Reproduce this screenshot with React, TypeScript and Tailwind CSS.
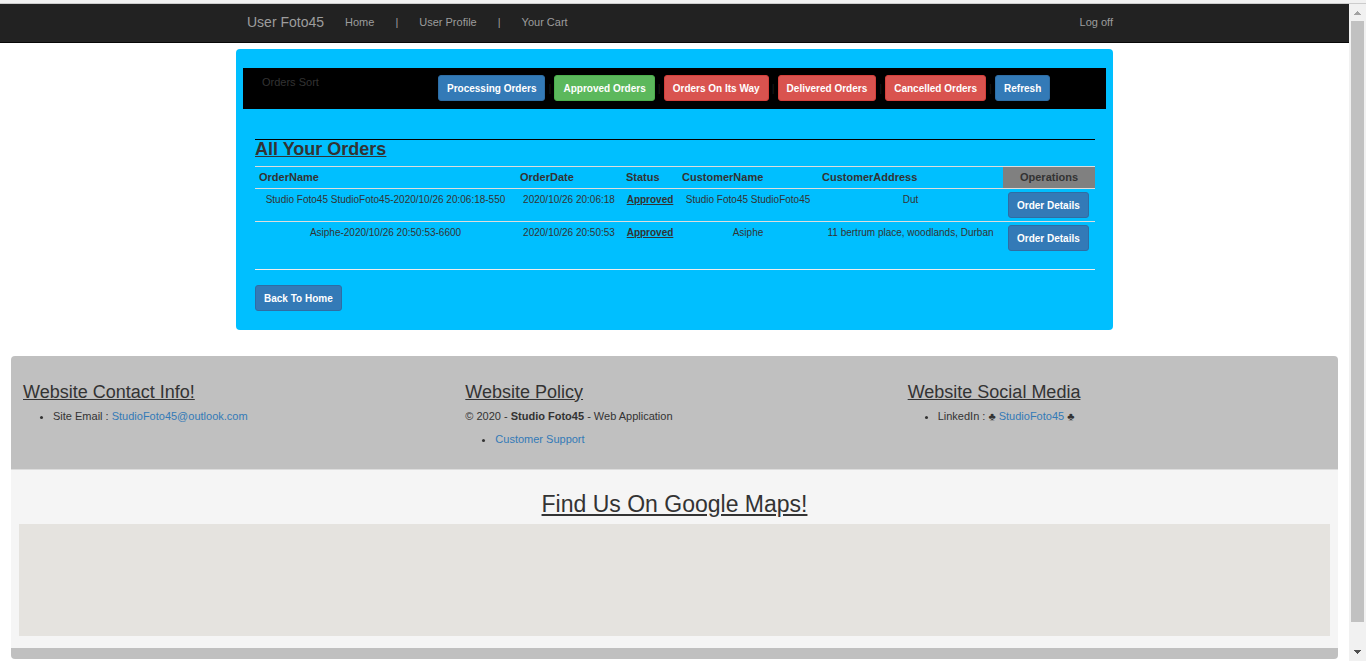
import React from "react";

type Tone = "primary" | "success" | "danger";

const tones: Record<Tone, string> = {
  primary: "bg-[#337ab7] border-[#2e6da4]",
  success: "bg-[#5cb85c] border-[#4cae4c]",
  danger: "bg-[#d9534f] border-[#d43f3a]",
};

function Button({ tone = "primary", children }: { tone?: Tone; children: React.ReactNode }) {
  return (
    <button
      type="button"
      className={`block h-[26px] shrink-0 whitespace-nowrap rounded-[3px] border px-2 pt-[2px] text-[10px] font-bold leading-4 text-white ${tones[tone]}`}
    >
      {children}
    </button>
  );
}

const filters: { label: string; tone: Tone }[] = [
  { label: "Processing Orders", tone: "primary" },
  { label: "Approved Orders", tone: "success" },
  { label: "Orders On Its Way", tone: "danger" },
  { label: "Delivered Orders", tone: "danger" },
  { label: "Cancelled Orders", tone: "danger" },
  { label: "Refresh", tone: "primary" },
];

const orders = [
  {
    name: "Studio Foto45 StudioFoto45-2020/10/26 20:06:18-550",
    date: "2020/10/26 20:06:18",
    customer: "Studio Foto45 StudioFoto45",
    address: "Dut",
  },
  {
    name: "Asiphe-2020/10/26 20:50:53-6600",
    date: "2020/10/26 20:50:53",
    customer: "Asiphe",
    address: "11 bertrum place, woodlands, Durban",
  },
];

function Navbar() {
  return (
    <nav className="border-b border-[#080808] bg-[#222222] text-[#9d9d9d]">
      <div className="mx-auto flex h-[38px] max-w-[877px] items-center gap-[21px] px-[11px] pb-[2px] text-[11px]">
        <a href="#" className="text-[14px]">User Foto45</a>
        <a href="#">Home</a>
        <span>|</span>
        <a href="#">User Profile</a>
        <span>|</span>
        <a href="#">Your Cart</a>
        <a href="#" className="-mr-[11px] ml-auto">Log off</a>
      </div>
    </nav>
  );
}

function Orders() {
  return (
    <main className="mx-auto mt-[6px] w-full max-w-[877px] rounded-[4px] bg-[#00bfff] px-[7px] pb-[19px] pt-[19px]">
      <div className="flex h-[41px] bg-black pl-[19px] pt-[7px] text-[#333333]">
        <span className="w-[176px] shrink-0 leading-[14px]">Orders Sort</span>
        <div className="flex">
          {filters.map((f, i) => (
            <React.Fragment key={f.label}>
              {i > 0 && <span className="w-[9px] text-center leading-[26px] text-[#1a1a1a]">|</span>}
              <Button tone={f.tone}>{f.label}</Button>
            </React.Fragment>
          ))}
        </div>
      </div>

      <div className="mt-[30px] pl-3 pr-[11px]">
        <section className="border-t border-black">
          <h1 className="h-[26px] text-[18px] font-bold leading-[18px] underline">All Your Orders</h1>
          <table className="w-full table-fixed border-collapse">
            <colgroup>
              <col />
              <col className="w-[106px]" />
              <col className="w-[56px]" />
              <col className="w-[140px]" />
              <col className="w-[185px]" />
              <col className="w-[92px]" />
            </colgroup>
            <thead>
              <tr className="h-[22px] border-y border-[#dddddd] text-left">
                <th className="px-1 pb-[2px]">OrderName</th>
                <th className="px-1 pb-[2px]">OrderDate</th>
                <th className="px-1 pb-[2px]">Status</th>
                <th className="px-1 pb-[2px]">CustomerName</th>
                <th className="px-1 pb-[2px]">CustomerAddress</th>
                <th className="bg-[#808080] px-1 pb-[2px] text-center">Operations</th>
              </tr>
            </thead>
            <tbody className="text-[10px]">
              {orders.map((o) => (
                <tr key={o.name} className="h-[33px] whitespace-nowrap border-t border-[#dddddd] text-center align-top">
                  <td className="pt-[3px]">{o.name}</td>
                  <td className="pt-[3px]">{o.date}</td>
                  <td className="pt-[3px] font-bold underline">Approved</td>
                  <td className="pt-[3px]">{o.customer}</td>
                  <td className="pt-[3px]">{o.address}</td>
                  <td className="pl-[5px] pt-[3px]">
                    <Button>Order Details</Button>
                  </td>
                </tr>
              ))}
            </tbody>
          </table>
        </section>
        <hr className="mb-[15px] mt-[14px] border-[#eeeeee]" />
        <Button>Back To Home</Button>
      </div>
    </main>
  );
}

function Footer() {
  const heading = "text-[18px] leading-5 underline";
  const list = "list-disc pl-[30px]";
  return (
    <footer className="mx-[11px] mt-[26px] overflow-hidden rounded-[4px] bg-[#c0c0c0]">
      <div className="grid h-[113px] grid-cols-3 pt-[26px]">
        <section className="px-3">
          <h2 className={heading}>Website Contact Info!</h2>
          <ul className={`${list} mt-[6px]`}>
            <li>
              Site Email : <a href="#" className="text-[#337ab7]">StudioFoto45@outlook.com</a>
            </li>
          </ul>
        </section>
        <section className="px-3">
          <h2 className={heading}>Website Policy</h2>
          <p className="mt-[6px]">
            © 2020 - <b>Studio Foto45</b> - Web Application
          </p>
          <ul className={`${list} mt-[7px]`}>
            <li>
              <a href="#" className="text-[#337ab7]">Customer Support</a>
            </li>
          </ul>
        </section>
        <section className="px-3">
          <h2 className={heading}>Website Social Media</h2>
          <ul className={`${list} mt-[6px]`}>
            <li>
              LinkedIn : ♣ <a href="#" className="text-[#337ab7]">StudioFoto45</a> ♣
            </li>
          </ul>
        </section>
      </div>
      <section className="border-t border-[#dddddd] bg-[#f5f5f5] px-2 pb-3 pt-[20px]">
        <h2 className="mb-[6px] text-center text-[23px] leading-7 underline">Find Us On Google Maps!</h2>
        <div className="h-28 bg-[#e5e3df]" />
      </section>
      <div className="h-[11px]" />
    </footer>
  );
}

function Scrollbar() {
  return (
    <div className="flex w-[17px] shrink-0 flex-col items-center bg-[#f1f1f1]" aria-hidden="true">
      <svg width="17" height="17" viewBox="0 0 17 17" shapeRendering="crispEdges">
        <path d="M8 7h1v1h1v1h1v1h1v1H5v-1h1V9h1V8h1z" fill="#a3a3a3" />
      </svg>
      <div className="w-[13px] flex-1 bg-[#c1c1c1]" />
      <div className="flex h-[39px] items-end">
        <svg width="17" height="17" viewBox="0 0 17 17" shapeRendering="crispEdges">
          <path d="M5 6h7v1h-1v1h-1v1H9v1H8V9H7V8H6V7H5z" fill="#505050" />
        </svg>
      </div>
    </div>
  );
}

export default function App() {
  return (
    <div className="flex min-h-screen flex-col bg-white font-['Liberation_Sans',Arial,sans-serif] text-[11px] leading-[16px] text-[#333333]">
      <div className="h-1 border-b border-[#cccccc] bg-[#f1f1f1]" />
      <div className="flex flex-1">
        <div className="min-w-0 flex-1">
          <Navbar />
          <Orders />
          <Footer />
        </div>
        <Scrollbar />
      </div>
    </div>
  );
}
